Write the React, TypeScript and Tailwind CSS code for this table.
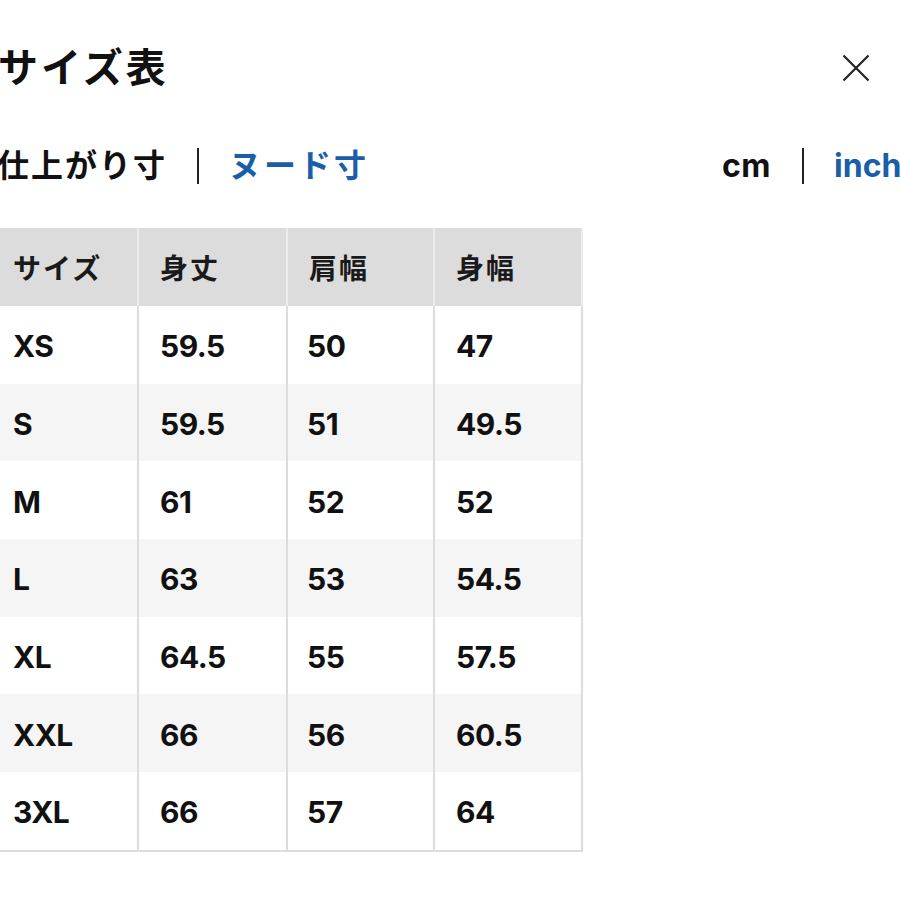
import React from "react";

const FONT = { fontFamily: "Inter, 'Noto Sans CJK JP', sans-serif" };

const HEAD = ["サイズ", "身丈", "肩幅", "身幅"];
const ROWS = [
  ["XS", "59.5", "50", "47"],
  ["S", "59.5", "51", "49.5"],
  ["M", "61", "52", "52"],
  ["L", "63", "53", "54.5"],
  ["XL", "64.5", "55", "57.5"],
  ["XXL", "66", "56", "60.5"],
  ["3XL", "66", "57", "64"],
];
const COLS = "grid-cols-[147px_149px_147px_148px]";

export default function App() {
  return (
    <div className="w-[900px] h-[900px] overflow-hidden bg-white text-[#111]" style={FONT}>
      <div className="flex items-center justify-between h-[70px] mt-[33px] pr-[30px]">
        <h1 className="ml-[-2px] text-[40px] font-bold tracking-[3px] leading-none">サイズ表</h1>
        <svg width="28" height="28" viewBox="0 0 28 28">
          <path d="M1.5 1.5L26.5 26.5M26.5 1.5L1.5 26.5" stroke="#222" strokeWidth="2.2" fill="none" />
        </svg>
      </div>

      <div className="flex items-center h-[50px] mt-[38px] whitespace-nowrap">
        <div className="flex items-center shrink-0 w-[725px] ml-[-3px] text-[32px] font-bold leading-none">
          <span className="tracking-[2px]">仕上がり寸</span>
          <span className="w-[2px] h-[36px] bg-[#222] ml-[30px] mr-[30px]" />
          <span className="text-[#1b5ea8] tracking-[3px]">ヌード寸</span>
        </div>
        <div className="flex items-center shrink-0 text-[32px] font-bold leading-none">
          <span className="tracking-[0.5px]">cm</span>
          <span className="w-[2px] h-[36px] bg-[#222] ml-[31px] mr-[30px]" />
          <span className="text-[#1b5ea8]">inch</span>
        </div>
      </div>

      <div className="ml-[-8px] mt-[37px] w-[591px] border-b-2 border-[#dcdcdc]">
        <div className={`grid ${COLS} h-[78px] bg-[#dcdcdc]`}>
          {HEAD.map((h) => (
            <div key={h} className="flex items-center pl-[21px] pt-[4px] border-r-2 border-[#ececec] text-[28px] font-bold tracking-[2px] text-[#1a1a1a]">
              {h}
            </div>
          ))}
        </div>
        {ROWS.map((r, ri) => (
          <div key={r[0]} className={`grid ${COLS} h-[77.7px] ${ri % 2 === 1 ? "bg-[#f5f5f5]" : "bg-white"}`}>
            {r.map((c, ci) => (
              <div key={ci} className={`flex items-center pt-[4px] border-r-2 border-[#dcdcdc] text-[30px] font-bold tracking-[-0.5px] ${ci === 2 ? "pl-[19px]" : "pl-[21px]"}`}>
                {c}
              </div>
            ))}
          </div>
        ))}
      </div>
    </div>
  );
}
